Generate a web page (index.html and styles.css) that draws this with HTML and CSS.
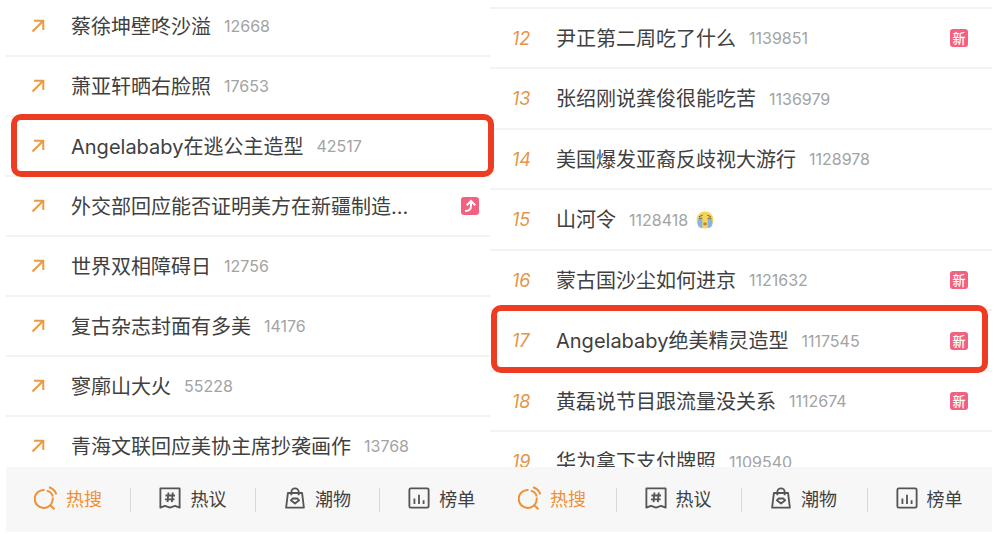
FILE: index.html
```html
<!DOCTYPE html>
<html lang="zh-CN">
<head>
  <meta charset="UTF-8" />
  <meta name="viewport" content="width=device-width, initial-scale=1.0" />
  <title>热搜</title>
  <link rel="stylesheet" href="styles.css">
</head>
<body>
  <!-- Shared icons -->
  <svg class="sprite" aria-hidden="true">
    <symbol id="arrow" viewBox="0 0 14 14"><path d="M1.5 12.5 12 2M3 1.7h9.3V11" /></symbol>
    <symbol id="search" viewBox="0 0 24 24">
      <path d="M10.5 4A9 9 0 1 0 18.600 11.500M16 19l4.500 4.200M12.800 4.600c3 .8 5.200 2.800 6 5.800M15 1.200c3.800 1.200 6.300 3.600 7.400 7.200" />
    </symbol>
    <symbol id="topic" viewBox="0 0 24 24">
      <path d="M1.500 1.500h21v21L17.500 20.500 12 22.500 6.500 20.500 1.500 22.500zM10.300 6l-1 10.500M15 6l-1 10.500M7 9.300h10.500M6.500 13.500h10.500" />
    </symbol>
    <symbol id="bag" viewBox="0 0 24 24">
      <path d="M4.300 6.500h15.400l2 16H2.300zM8 9V5.500a4 4 0 0 1 8 0V9M9.500 12.500h5l2 2L12 18l-4.500-3.500z" />
    </symbol>
    <symbol id="chart" viewBox="0 0 24 24">
      <rect x="1.5" y="1.5" width="21" height="21" rx="1.5" />
      <path d="M7 12.5v6M12 8.5v10M17 14.5v4" />
    </symbol>
  </svg>

  <main class="page">
    <section class="panel panel-left">
      <ul class="list">
        <li class="row"><svg class="arrow"><use href="#arrow" /></svg><a href="#" class="title">蔡徐坤壁咚沙溢</a><span class="count">12668</span></li>
        <li class="row"><svg class="arrow"><use href="#arrow" /></svg><a href="#" class="title">萧亚轩晒右脸照</a><span class="count">17653</span></li>
        <li class="row marked"><svg class="arrow"><use href="#arrow" /></svg><a href="#" class="title">Angelababy在逃公主造型</a><span class="count">42517</span></li>
        <li class="row">
          <svg class="arrow"><use href="#arrow" /></svg><a href="#" class="title">外交部回应能否证明美方在新疆制造…</a>
          <span class="badge"><svg class="badge-up" viewBox="0 0 18 18"><path d="M4 14c4 .2 6-1.7 6-5V5M5.800 8.200 10 4l4.200 4.200" /></svg></span>
        </li>
        <li class="row"><svg class="arrow"><use href="#arrow" /></svg><a href="#" class="title">世界双相障碍日</a><span class="count">12756</span></li>
        <li class="row"><svg class="arrow"><use href="#arrow" /></svg><a href="#" class="title">复古杂志封面有多美</a><span class="count">14176</span></li>
        <li class="row"><svg class="arrow"><use href="#arrow" /></svg><a href="#" class="title">寥廓山大火</a><span class="count">55228</span></li>
        <li class="row"><svg class="arrow"><use href="#arrow" /></svg><a href="#" class="title">青海文联回应美协主席抄袭画作</a><span class="count">13768</span></li>
      </ul>
      <nav class="tabs">
        <button class="tab active"><svg class="icon"><use href="#search" /></svg>热搜</button>
        <button class="tab"><svg class="icon"><use href="#topic" /></svg>热议</button>
        <button class="tab"><svg class="icon"><use href="#bag" /></svg>潮物</button>
        <button class="tab"><svg class="icon"><use href="#chart" /></svg>榜单</button>
      </nav>
    </section>

    <section class="panel panel-right">
      <ul class="list">
        <li class="row"><span class="rank">12</span><a href="#" class="title">尹正第二周吃了什么</a><span class="count">1139851</span><span class="badge">新</span></li>
        <li class="row"><span class="rank">13</span><a href="#" class="title">张绍刚说龚俊很能吃苦</a><span class="count">1136979</span></li>
        <li class="row"><span class="rank">14</span><a href="#" class="title">美国爆发亚裔反歧视大游行</a><span class="count">1128978</span></li>
        <li class="row">
          <span class="rank">15</span><a href="#" class="title">山河令</a><span class="count">1128418</span>
          <svg class="emoji" viewBox="0 0 18 18">
            <circle cx="9" cy="9" r="8.5" fill="#f6d455" />
            <path d="M2.500 7h3.800v10.200Q1.500 17 1.500 12zM11.700 7h3.800l1 5q0 5-4.800 5.200z" fill="#84b5e8" />
            <path d="M3 5.800 6.800 4M15 5.800 11.200 4M2.800 7.200h3.500M11.700 7.200h3.500" stroke="#80642c" fill="none" />
            <ellipse cx="9" cy="13" rx="1.8" ry="1.4" fill="#d9703f" />
          </svg>
        </li>
        <li class="row"><span class="rank">16</span><a href="#" class="title">蒙古国沙尘如何进京</a><span class="count">1121632</span><span class="badge">新</span></li>
        <li class="row marked"><span class="rank">17</span><a href="#" class="title">Angelababy绝美精灵造型</a><span class="count">1117545</span><span class="badge">新</span></li>
        <li class="row"><span class="rank">18</span><a href="#" class="title">黄磊说节目跟流量没关系</a><span class="count">1112674</span><span class="badge">新</span></li>
        <li class="row"><span class="rank">19</span><a href="#" class="title">华为拿下支付牌照</a><span class="count">1109540</span></li>
      </ul>
      <nav class="tabs">
        <button class="tab active"><svg class="icon"><use href="#search" /></svg>热搜</button>
        <button class="tab"><svg class="icon"><use href="#topic" /></svg>热议</button>
        <button class="tab"><svg class="icon"><use href="#bag" /></svg>潮物</button>
        <button class="tab"><svg class="icon"><use href="#chart" /></svg>榜单</button>
      </nav>
    </section>
  </main>
</body>
</html>
```
FILE: styles.css
```css
* {
  box-sizing: border-box;
  margin: 0;
  padding: 0;
}

body {
  font-family: Inter, "Noto Sans CJK SC", sans-serif;
  background: #fff;
  color: #404040;
}

.sprite {
  display: none;
}

.page {
  display: grid;
  grid-template-columns: 484fr 502fr;
  height: 100vh;
  padding: 0 8px 2px 6px;
  overflow: hidden;
}

.panel {
  display: flex;
  flex-direction: column;
  min-width: 0;
  min-height: 0;
}

.list {
  flex: 1;
  min-height: 0;
  list-style: none;
  overflow-x: visible;
  overflow-y: clip;
}

.row {
  position: relative;
  display: flex;
  align-items: center;
  height: 60px;
  border-top: 2px solid #f3f3f3;
  font-size: 20px;
  white-space: nowrap;
}

.title {
  padding-bottom: 2px;
  color: inherit;
  text-decoration: none;
}

.count {
  margin-left: 13px;
  font-size: 16px;
  color: #a3a3a3;
}

.badge {
  display: flex;
  align-items: center;
  justify-content: center;
  width: 18px;
  height: 18px;
  margin-left: auto;
  border-radius: 3px;
  background: #f4607f;
  color: #fff;
  font-size: 13px;
  font-weight: 500;
  line-height: 18px;
}

.badge-up {
  width: 18px;
  height: 18px;
  fill: none;
  stroke: #fff;
  stroke-width: 2;
}

.emoji {
  width: 18px;
  height: 18px;
  margin-left: 8px;
}

/* Red frame round the highlighted topic */
.marked::after {
  content: "";
  position: absolute;
  z-index: 1;
  border: 6px solid #ee3c22;
  border-radius: 10px;
  pointer-events: none;
}

/* Left: rising topics, scrolled by a few pixels */
.panel-left .row:first-child {
  margin-top: -5px;
}

.panel-left .row {
  padding: 0 11px 0 25px;
}

.panel-left .marked::after {
  inset: -3px -4px -2px 5px;
}

.arrow {
  flex: none;
  width: 14px;
  height: 14px;
  margin-right: 26px;
  fill: none;
  stroke: #eb9a45;
  stroke-width: 2;
}

/* Right: ranked topics */
.panel-right .list {
  padding-top: 7px;
}

.panel-right .row {
  padding: 0 24px 0 22px;
}

.panel-right .row:nth-child(even) {
  height: 61px;
}

.panel-right .marked::after {
  inset: -6px 4px -3px 1px;
}

.rank {
  width: 44px;
  color: #e5954a;
  font-size: 18px;
  font-style: italic;
}

.tabs {
  display: grid;
  grid-template-columns: repeat(4, 1fr);
  height: 65px;
  background: #f7f7f7;
}

.panel-left .tabs {
  grid-template-columns: 9fr 9fr 9fr 8fr;
}

.tab {
  display: flex;
  align-items: center;
  gap: 9px;
  padding: 0 0 3px 29px;
  border: 0;
  background: none;
  color: #404040;
  font-family: inherit;
  font-size: 18px;
  white-space: nowrap;
  cursor: pointer;
}

.tab + .tab {
  background: linear-gradient(#d9d9d9, #d9d9d9) left center / 1px 24px no-repeat;
}

.tab.active {
  gap: 8px;
  padding-left: 28px;
  color: #ee9035;
}

.icon {
  flex: none;
  width: 22px;
  height: 22px;
  fill: none;
  stroke: #555;
  stroke-width: 2;
  stroke-linejoin: round;
}

.active .icon {
  width: 24px;
  height: 24px;
  stroke: #ee9035;
}
```
